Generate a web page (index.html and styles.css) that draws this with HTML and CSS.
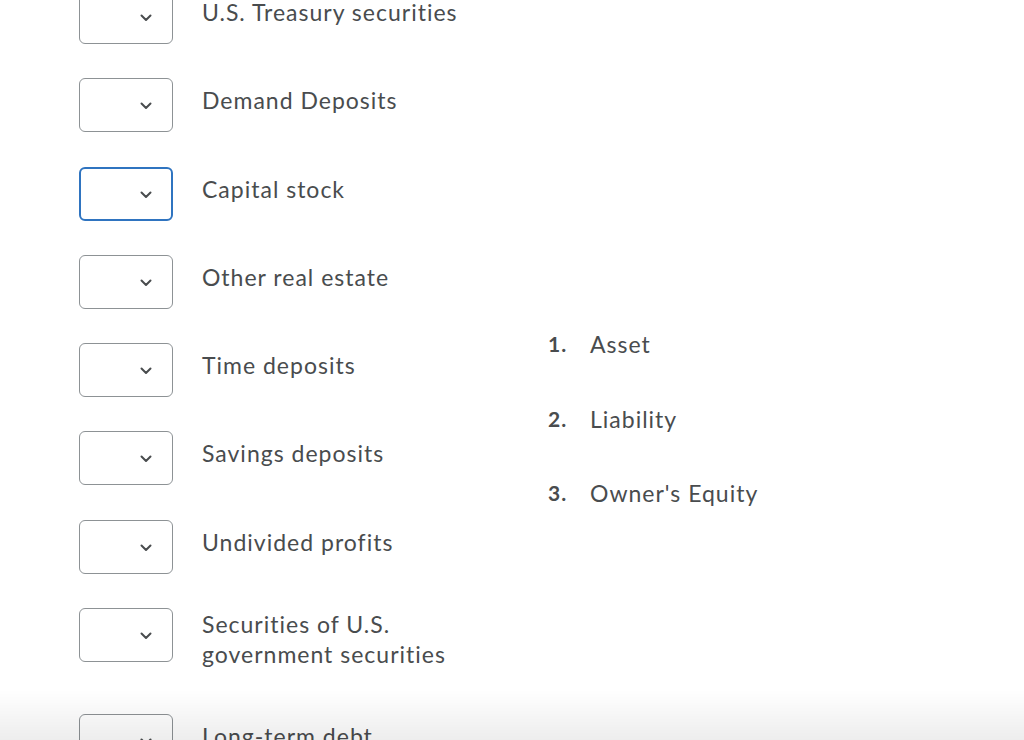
FILE: index.html
```html
<!DOCTYPE html>
<html>
<head>
<meta charset="utf-8">
<link rel="stylesheet" href="styles.css">
</head>
<body>
<div class="page">
  <div class="matches">
    <div class="row"><div class="select"><svg class="chev" viewBox="0 0 12 8"><path d="M1.5 1.5 L6 6 L10.5 1.5" /></svg></div><div class="label">U.S. Treasury securities</div></div>
    <div class="row"><div class="select"><svg class="chev" viewBox="0 0 12 8"><path d="M1.5 1.5 L6 6 L10.5 1.5" /></svg></div><div class="label">Demand Deposits</div></div>
    <div class="row"><div class="select focus"><svg class="chev" viewBox="0 0 12 8"><path d="M1.5 1.5 L6 6 L10.5 1.5" /></svg></div><div class="label">Capital stock</div></div>
    <div class="row"><div class="select"><svg class="chev" viewBox="0 0 12 8"><path d="M1.5 1.5 L6 6 L10.5 1.5" /></svg></div><div class="label">Other real estate</div></div>
    <div class="row"><div class="select"><svg class="chev" viewBox="0 0 12 8"><path d="M1.5 1.5 L6 6 L10.5 1.5" /></svg></div><div class="label">Time deposits</div></div>
    <div class="row"><div class="select"><svg class="chev" viewBox="0 0 12 8"><path d="M1.5 1.5 L6 6 L10.5 1.5" /></svg></div><div class="label">Savings deposits</div></div>
    <div class="row"><div class="select"><svg class="chev" viewBox="0 0 12 8"><path d="M1.5 1.5 L6 6 L10.5 1.5" /></svg></div><div class="label">Undivided profits</div></div>
    <div class="row"><div class="select"><svg class="chev" viewBox="0 0 12 8"><path d="M1.5 1.5 L6 6 L10.5 1.5" /></svg></div><div class="label multi">Securities of U.S.<br>government securities</div></div>
    <div class="row"><div class="select"><svg class="chev" viewBox="0 0 12 8"><path d="M1.5 1.5 L6 6 L10.5 1.5" /></svg></div><div class="label">Long-term debt</div></div>
  </div>
  <ol class="choices">
    <li><span class="num">1.</span><span class="choice">Asset</span></li>
    <li><span class="num">2.</span><span class="choice">Liability</span></li>
    <li><span class="num">3.</span><span class="choice">Owner's Equity</span></li>
  </ol>
</div>
<div class="fade"></div>
</body>
</html>
```
FILE: styles.css
```css
html, body {
  margin: 0;
  padding: 0;
  background: #ffffff;
  overflow: hidden;
  height: 740px;
}
body {
  font-family: Lato, "Noto Sans", sans-serif;
  color: #494c4e;
  font-variant-ligatures: none;
}
.page {
  display: flex;
  align-items: flex-start;
  padding-left: 79px;
}
.matches {
  width: 469px;
  flex-shrink: 0;
  margin-top: -10px;
}
.row {
  display: flex;
  align-items: flex-start;
  margin-bottom: 34.3px;
}
.select {
  box-sizing: border-box;
  width: 94px;
  height: 54px;
  border: 1px solid #8d9295;
  border-radius: 6px;
  display: flex;
  align-items: center;
  justify-content: flex-end;
  padding-right: 20px;
  flex-shrink: 0;
  background: #fff;
}
.select.focus {
  border: 2px solid #2f74c0;
  padding-right: 19px;
}
.chev {
  width: 12px;
  height: 8px;
  margin-top: 2px;
}
.chev path {
  fill: none;
  stroke: #494c4e;
  stroke-width: 2;
  stroke-linecap: round;
  stroke-linejoin: round;
}
.label {
  margin-left: 29px;
  font-size: 23px;
  letter-spacing: 1px;
  line-height: 30px;
  padding-top: 7px;
  padding-bottom: 5px;
  white-space: nowrap;
}
.label.multi {
  padding-top: 1px;
  padding-bottom: 11px;
}
.choices {
  list-style: none;
  margin: 329px 0 0 0;
  padding: 0;
}
.choices li {
  display: flex;
  font-size: 23px;
  letter-spacing: 1px;
  line-height: 30px;
  margin-bottom: 44.5px;
}
.num {
  width: 42px;
  font-weight: 700;
  font-size: 21px;
  letter-spacing: 1px;
}
.fade {
  position: fixed;
  left: 0;
  right: 0;
  bottom: 0;
  height: 50px;
  background: linear-gradient(rgba(0,0,0,0), rgba(0,0,0,0.07));
  pointer-events: none;
}
```
